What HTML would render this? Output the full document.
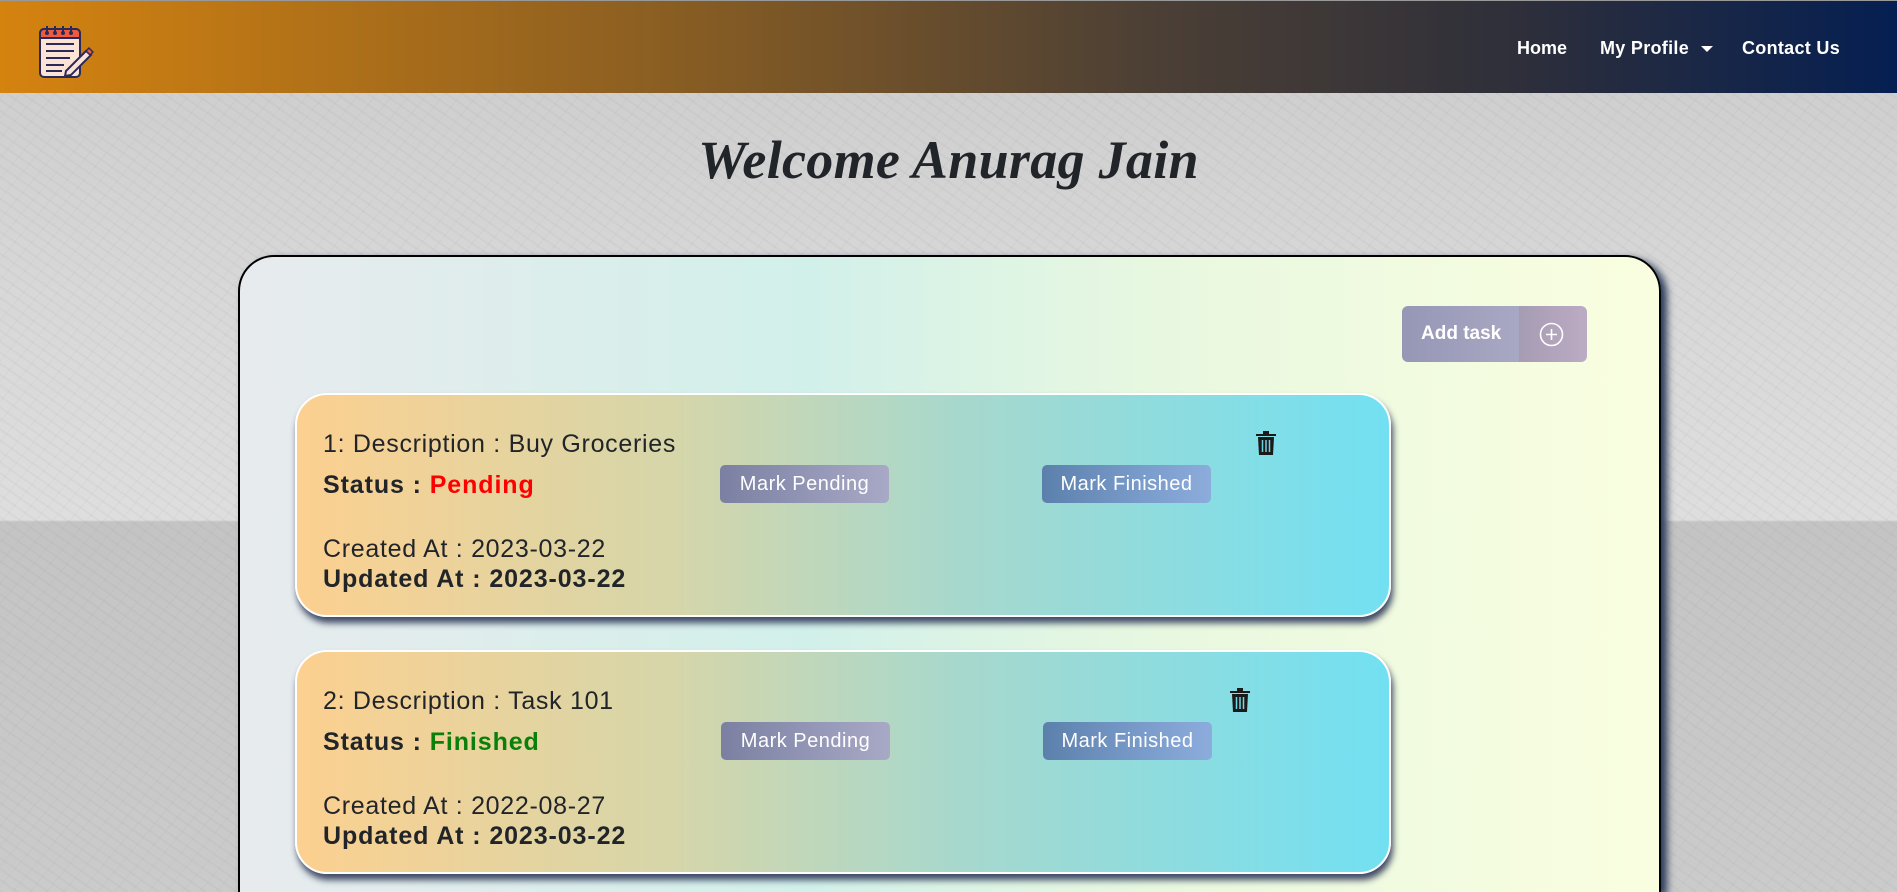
<!DOCTYPE html>
<html><head><meta charset="utf-8">
<style>
*{margin:0;padding:0;box-sizing:border-box}
html,body{width:1897px;height:892px;overflow:hidden}
body{font-family:"Liberation Sans",sans-serif;position:relative;
background:linear-gradient(180deg,#cfcfcf 93px,#d8d8d8 300px,#dedede 520px,#c4c4c4 522px,#cbcbcb 892px);}
.tex{position:absolute;inset:0;background:
repeating-linear-gradient(35deg,rgba(120,120,120,.06) 0 2px,transparent 2px 9px),
repeating-linear-gradient(-50deg,rgba(110,110,110,.05) 0 1px,transparent 1px 13px);}
nav{position:absolute;left:0;top:0;width:1897px;height:93px;border-top:1px solid #999;
background:linear-gradient(90deg,#d5830f 0%,#8a5e22 35%,#4d4035 60%,#2e2f3a 80%,#051f52 100%);}
.nl{position:absolute;top:37px;color:#fff;font-weight:bold;font-size:18px}
h1{position:absolute;left:0;width:1897px;top:129px;text-align:center;font-family:"Liberation Serif",serif;font-style:italic;font-weight:bold;font-size:54px;color:#212529;letter-spacing:0.3px}
.main{position:absolute;left:238px;top:255px;width:1423px;height:637px;border:2px solid #000;border-bottom:none;border-radius:36px 36px 0 0;
background:linear-gradient(90deg,#e8ebee 0%,#d2f0ea 40%,#e8f8e0 65%,#fafee0 100%);
box-shadow:6px 4px 8px #2a3b5a}
.add{position:absolute;left:1402px;top:306px;width:185px;height:56px;border-radius:6px;overflow:hidden;display:flex}
.add .a{width:117px;background:linear-gradient(90deg,#9597b5,#a9a8c4);color:#fff;font-weight:bold;font-size:19px;line-height:56px;padding-left:19px}
.add .b{flex:1;background:linear-gradient(90deg,#a59cb3,#bcabc4);position:relative}
.card{position:absolute;left:295px;width:1096px;height:224px;border:2px solid #fff;border-radius:32px;
background:linear-gradient(90deg,#fcd090 0%,#d5d6aa 35%,#a8d8cc 60%,#72e0f2 100%);
box-shadow:2px 6px 7px #3f4a66;color:#212529}
.t{position:absolute;left:26px;font-size:25px;letter-spacing:.7px;white-space:nowrap}
.bd{font-weight:bold;letter-spacing:.9px}
.btn{position:absolute;width:169px;height:38px;border-radius:5px;color:#fff;font-size:20px;text-align:center;line-height:38px;letter-spacing:.5px}
.mp{background:linear-gradient(90deg,#7b80a2,#a8a9c6)}
.mf{background:linear-gradient(90deg,#5c80ac,#7a9ccb 60%,#8cacdc)}
.tr{position:absolute}
</style></head><body>
<div class="tex"></div>
<nav>
<svg style="position:absolute;left:38px;top:24px" width="56" height="54" viewBox="0 0 56 54">
<rect x="2" y="4" width="40" height="48" rx="4" fill="#fbe3d6" stroke="#2a2a5a" stroke-width="2"/>
<path d="M2 8a4 4 0 0 1 4-4h32a4 4 0 0 1 4 4v5H2z" fill="#ef5a3c" stroke="#2a2a5a" stroke-width="2"/>
<g fill="#2a2a5a"><circle cx="9" cy="8" r="2"/><circle cx="17" cy="8" r="2"/><circle cx="25" cy="8" r="2"/><circle cx="33" cy="8" r="2"/>
<rect x="8" y="1" width="2" height="7"/><rect x="16" y="1" width="2" height="7"/><rect x="24" y="1" width="2" height="7"/><rect x="32" y="1" width="2" height="7"/></g>
<g stroke="#2a2a5a" stroke-width="2"><line x1="8" y1="19" x2="36" y2="19"/><line x1="8" y1="26" x2="36" y2="26"/><line x1="8" y1="33" x2="32" y2="33"/><line x1="8" y1="40" x2="26" y2="40"/><line x1="8" y1="46" x2="24" y2="46"/></g>
<path d="M28 46l20-20 5 4-20 20-6 1z" fill="#fbe3d6" stroke="#2a2a5a" stroke-width="2"/>
<path d="M48 26l3-3 4 4-3 3z" fill="#ef5a3c" stroke="#2a2a5a" stroke-width="1.5"/>
</svg>
<span class="nl" style="left:1517px">Home</span>
<span class="nl" style="left:1600px;letter-spacing:.3px">My Profile</span>
<span style="position:absolute;left:1701px;top:45px;border-left:6px solid transparent;border-right:6px solid transparent;border-top:6px solid #fff"></span>
<span class="nl" style="left:1742px;letter-spacing:.3px">Contact Us</span>
</nav>
<h1>Welcome Anurag Jain</h1>
<div class="main"></div>
<div class="add"><div class="a">Add task</div><div class="b">
<svg style="position:absolute;left:20px;top:16px" width="25" height="25" viewBox="0 0 25 25"><circle cx="12.5" cy="12.5" r="11" fill="none" stroke="#fff" stroke-width="1.6"/><path d="M12.5 7v11M7 12.5h11" stroke="#fff" stroke-width="1.6"/></svg></div></div>

<div class="card" style="top:393px">
<div class="t" style="top:35px">1: Description : Buy Groceries</div>
<div class="t bd" style="top:76px">Status : <span style="color:#f00">Pending</span></div>
<div class="btn mp" style="left:423px;top:70px">Mark Pending</div>
<div class="btn mf" style="left:745px;top:70px">Mark Finished</div>
<svg class="tr" style="left:958px;top:35px" width="22" height="26" viewBox="0 0 22 26"><path d="M1 4h20v2H1zM8 1h6v3H8z" fill="#1a1a1a"/><path d="M3 7h16l-1 18H4z" fill="#1a1a1a"/><path d="M7.5 10v12M11 10v12M14.5 10v12" stroke="#6fcfe0" stroke-width="1.5"/></svg>
<div class="t" style="top:140px">Created At : 2023-03-22</div>
<div class="t bd" style="top:170px">Updated At : 2023-03-22</div>
</div>

<div class="card" style="top:650px">
<div class="t" style="top:35px">2: Description : Task 101</div>
<div class="t bd" style="top:76px">Status : <span style="color:#0a800a">Finished</span></div>
<div class="btn mp" style="left:424px;top:70px">Mark Pending</div>
<div class="btn mf" style="left:746px;top:70px">Mark Finished</div>
<svg class="tr" style="left:932px;top:35px" width="22" height="26" viewBox="0 0 22 26"><path d="M1 4h20v2H1zM8 1h6v3H8z" fill="#1a1a1a"/><path d="M3 7h16l-1 18H4z" fill="#1a1a1a"/><path d="M7.5 10v12M11 10v12M14.5 10v12" stroke="#75d8e6" stroke-width="1.5"/></svg>
<div class="t" style="top:140px">Created At : 2022-08-27</div>
<div class="t bd" style="top:170px">Updated At : 2023-03-22</div>
</div>
</body></html>
